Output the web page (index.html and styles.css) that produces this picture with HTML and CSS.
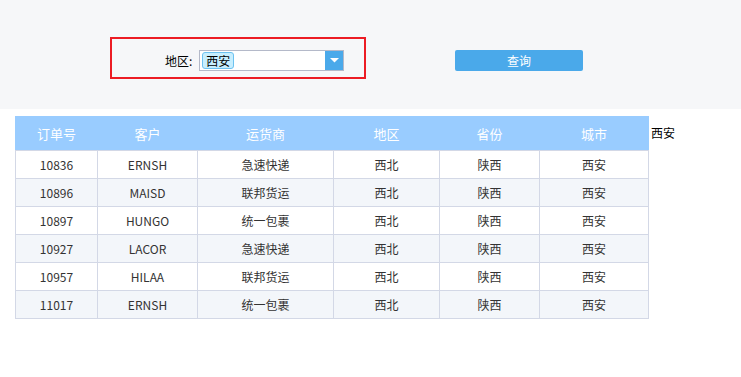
FILE: index.html
```html
<!DOCTYPE html>
<html lang="zh">
<head>
<meta charset="utf-8">
<link rel="stylesheet" href="styles.css">
</head>
<body>
<div class="panel">
  <div class="filter">
    <span class="label">地区:</span>
    <div class="select">
      <span class="tag">西安</span>
      <span class="arrow"><svg width="9" height="5" viewBox="0 0 9 5"><path d="M0 0H9L4.5 4.5Z" fill="#fff"/></svg></span>
    </div>
  </div>
  <button class="query">查询</button>
</div>
<div class="main">
  <table class="grid">
    <colgroup>
      <col style="width:82px"><col style="width:100px"><col style="width:136px"><col style="width:106px"><col style="width:100px"><col style="width:109px">
    </colgroup>
    <thead>
      <tr><th>订单号</th><th>客户</th><th>运货商</th><th>地区</th><th>省份</th><th>城市</th></tr>
    </thead>
    <tbody>
      <tr><td>10836</td><td>ERNSH</td><td>急速快递</td><td>西北</td><td>陕西</td><td>西安</td></tr>
      <tr><td>10896</td><td>MAISD</td><td>联邦货运</td><td>西北</td><td>陕西</td><td>西安</td></tr>
      <tr><td>10897</td><td>HUNGO</td><td>统一包裹</td><td>西北</td><td>陕西</td><td>西安</td></tr>
      <tr><td>10927</td><td>LACOR</td><td>急速快递</td><td>西北</td><td>陕西</td><td>西安</td></tr>
      <tr><td>10957</td><td>HILAA</td><td>联邦货运</td><td>西北</td><td>陕西</td><td>西安</td></tr>
      <tr><td>11017</td><td>ERNSH</td><td>统一包裹</td><td>西北</td><td>陕西</td><td>西安</td></tr>
    </tbody>
  </table>
  <span class="side">西安</span>
</div>
</body>
</html>
```

FILE: styles.css
```css
html, body {
  margin: 0;
  padding: 0;
  background: #fff;
  font-family: "Noto Sans CJK SC", "Noto Sans", sans-serif;
  font-size: 12px;
  color: #333;
}
.panel {
  height: 109px;
  background: #f6f7f9;
  display: flex;
  align-items: flex-start;
  padding-top: 37px;
  padding-left: 110px;
  box-sizing: border-box;
}
.filter {
  width: 256px;
  height: 42px;
  box-sizing: border-box;
  border: 2px solid #ec1c24;
  display: flex;
  align-items: flex-start;
  padding-left: 53px;
  padding-top: 11px;
}
.label {
  color: #000;
  font-size: 12px;
  line-height: 21px;
  margin-right: 7px;
}
.select {
  width: 145px;
  height: 21px;
  box-sizing: border-box;
  border: 1px solid #b4b9c9;
  background: #fff;
  display: flex;
  align-items: center;
  justify-content: space-between;
  padding-left: 2px;
}
.tag {
  background: #c7eefe;
  border: 1px solid #6dc2f0;
  border-radius: 3px;
  height: 17px;
  line-height: 16px;
  box-sizing: border-box;
  padding: 0 3px;
  color: #000;
  font-size: 12px;
}
.arrow {
  width: 18px;
  height: 19px;
  background: #4aa9ea;
  display: flex;
  align-items: center;
  justify-content: center;
}
.query {
  margin-left: 89px;
  margin-top: 13px;
  width: 128px;
  height: 21px;
  border: none;
  border-radius: 2px;
  background: #4aa9ea;
  color: #fff;
  font-family: "Noto Sans CJK SC", sans-serif;
  font-size: 12px;
  padding: 0;
}
.main {
  display: flex;
  align-items: flex-start;
  padding: 7px 0 0 15px;
}
.grid {
  border-collapse: collapse;
  table-layout: fixed;
  width: 633px;
}
.grid th {
  background: #99ccff;
  color: #fff;
  font-weight: normal;
  font-size: 13px;
  height: 33px;
  padding: 0;
  border: 1px solid #99ccff;
  border-bottom: 1px solid #d3d8e6;
}
.grid td {
  height: 27px;
  padding: 0;
  text-align: center;
  border: 1px solid #d3d8e6;
  color: #333;
  font-size: 12px;
}
.grid tbody tr:nth-child(even) td {
  background: #f3f6fa;
}
.side {
  color: #000;
  font-size: 12px;
  margin-left: 2px;
  margin-top: 8px;
}
```
